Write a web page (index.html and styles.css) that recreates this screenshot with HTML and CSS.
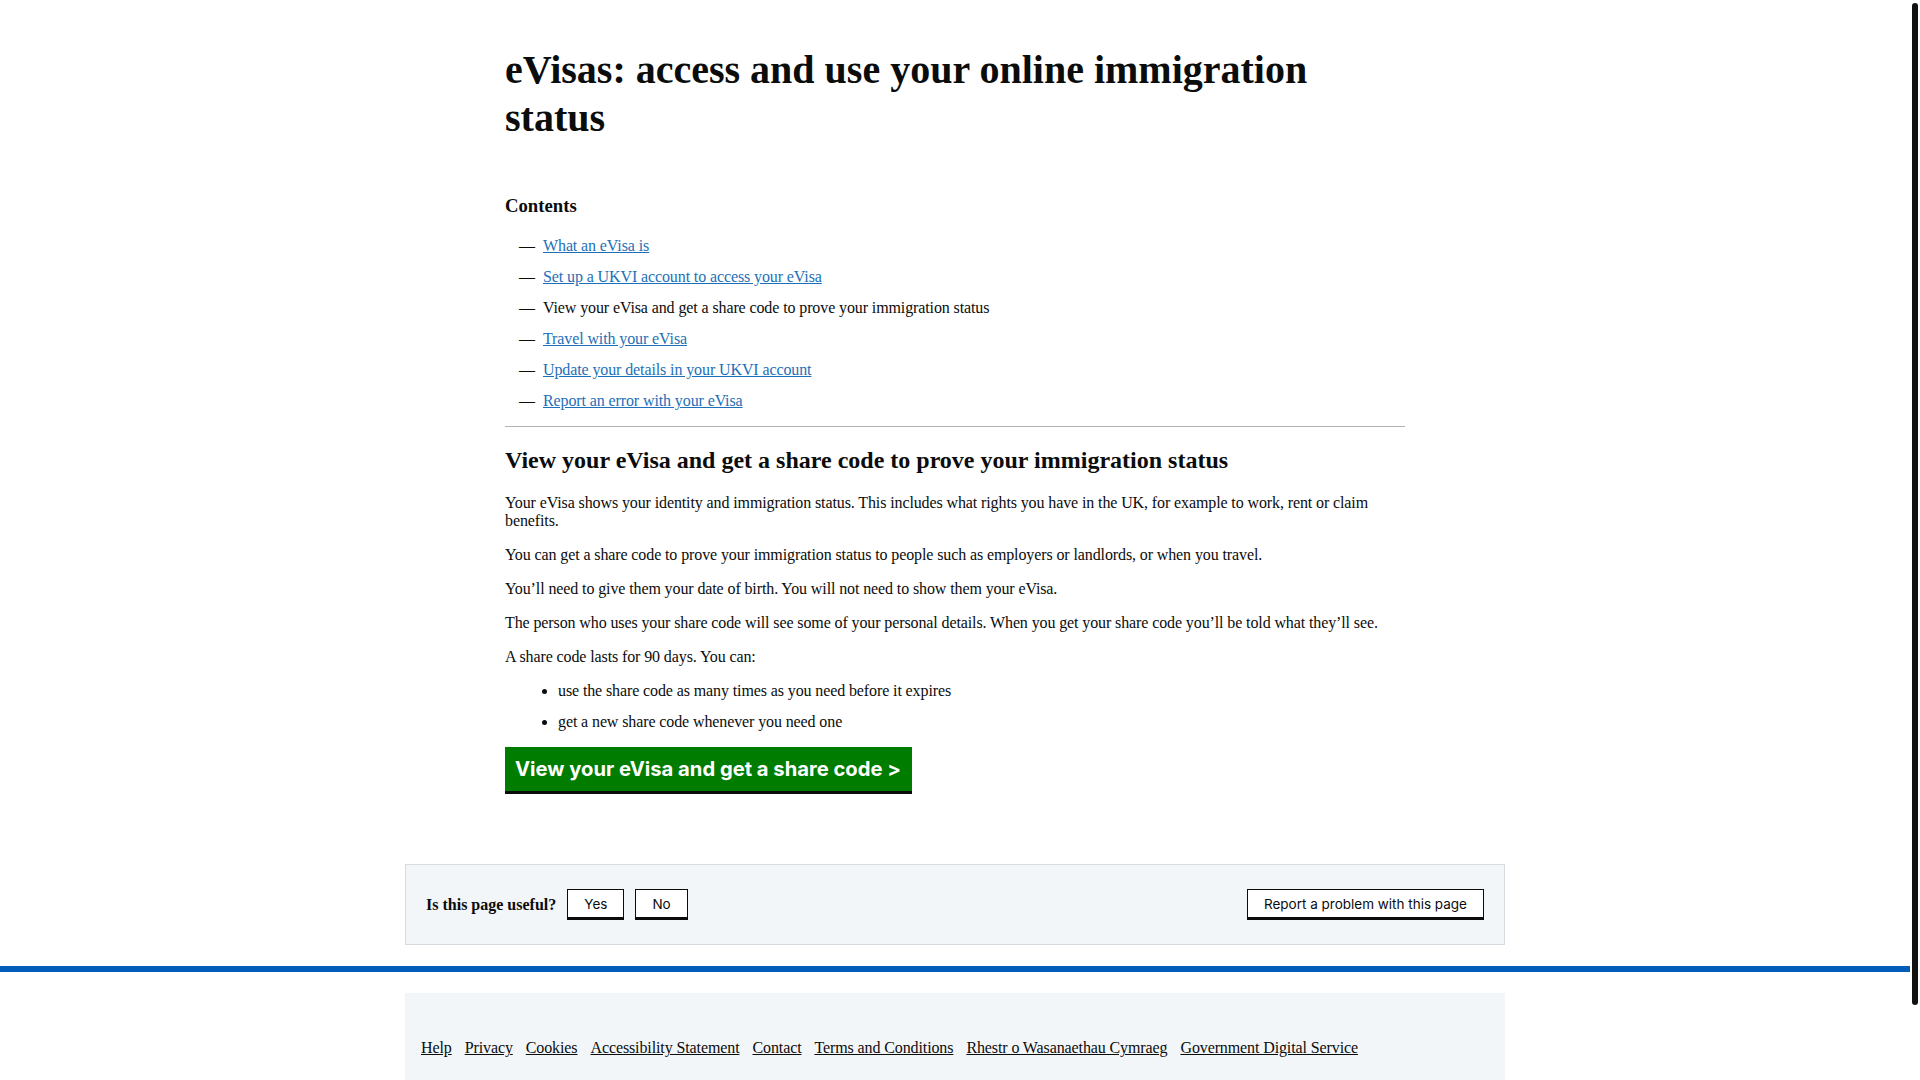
FILE: index.html
```html
<!DOCTYPE html>
<html lang="en">
<head>
<meta charset="utf-8">
<title>eVisas: access and use your online immigration status</title>
<link rel="stylesheet" href="styles.css">
</head>
<body>
<div class="viewport">
  <div class="page">
    <main class="main">
      <h1 class="title">eVisas: access and use your online immigration status</h1>
      <nav class="contents">
        <h2 class="contents-title">Contents</h2>
        <ul class="contents-list">
          <li><a href="#">What an eVisa is</a></li>
          <li><a href="#">Set up a UKVI account to access your eVisa</a></li>
          <li><span>View your eVisa and get a share code to prove your immigration status</span></li>
          <li><a href="#">Travel with your eVisa</a></li>
          <li><a href="#">Update your details in your UKVI account</a></li>
          <li><a href="#">Report an error with your eVisa</a></li>
        </ul>
      </nav>
      <hr class="rule">
      <h2 class="section-title">View your eVisa and get a share code to prove your immigration status</h2>
      <p>Your eVisa shows your identity and immigration status. This includes what rights you have in the UK, for example to work, rent or claim benefits.</p>
      <p>You can get a share code to prove your immigration status to people such as employers or landlords, or when you travel.</p>
      <p>You’ll need to give them your date of birth. You will not need to show them your eVisa.</p>
      <p>The person who uses your share code will see some of your personal details. When you get your share code you’ll be told what they’ll see.</p>
      <p>A share code lasts for 90 days. You can:</p>
      <ul class="bullets">
        <li>use the share code as many times as you need before it expires</li>
        <li>get a new share code whenever you need one</li>
      </ul>
      <a class="start-button" href="#">View your eVisa and get a share code &gt;</a>
    </main>

    <section class="feedback">
      <div class="feedback-left">
        <span class="feedback-q">Is this page useful?</span>
        <button class="fb-button" type="button">Yes</button>
        <button class="fb-button" type="button">No</button>
      </div>
      <button class="fb-button" type="button">Report a problem with this page</button>
    </section>

    <footer class="footer">
      <div class="footer-inner">
        <ul class="footer-links">
          <li><a href="#">Help</a></li>
          <li><a href="#">Privacy</a></li>
          <li><a href="#">Cookies</a></li>
          <li><a href="#">Accessibility Statement</a></li>
          <li><a href="#">Contact</a></li>
          <li><a href="#">Terms and Conditions</a></li>
          <li><a href="#">Rhestr o Wasanaethau Cymraeg</a></li>
          <li><a href="#">Government Digital Service</a></li>
        </ul>
      </div>
    </footer>
  </div>
  <div class="rail"><div class="thumb"></div></div>
</div>
</body>
</html>
```
FILE: styles.css
```css
html {
  overflow: hidden;
}

body {
  margin: 0;
  font-family: "Liberation Serif", "Times New Roman", serif;
  font-size: 16px;
  letter-spacing: -0.11px;
  color: #0b0c0c;
  background: #ffffff;
}

.viewport {
  display: flex;
  height: 100vh;
}

.page {
  flex: 1;
  overflow: hidden;
}

.rail {
  width: 10px;
  padding: 3px 2px;
  box-sizing: border-box;
  background: #ffffff;
}

.thumb {
  width: 6px;
  height: 1002px;
  background: #111111;
  border-radius: 3px;
}

.main {
  width: 900px;
  margin: 0 auto;
  padding-top: 46px;
}

.title {
  font-size: 40px;
  line-height: 48px;
  font-weight: bold;
  letter-spacing: 0;
  margin: 0 0 53px;
}

.contents-title {
  font-size: 18.72px;
  font-weight: bold;
  letter-spacing: 0;
  margin: 0 0 19px;
}

.contents-list {
  list-style: none;
  margin: 0 0 16px;
  padding: 0 0 0 14px;
}

.contents-list li {
  display: flex;
  line-height: 19px;
  margin-bottom: 12px;
}

.contents-list li:last-child {
  margin-bottom: 0;
}

.contents-list li::before {
  content: "—";
  width: 16px;
  margin-right: 8px;
}

a {
  color: #1d70b8;
}

.rule {
  border: 0;
  border-top: 1px solid #b1b4b6;
  height: 0;
  margin: 0;
}

.section-title {
  font-size: 24px;
  font-weight: bold;
  letter-spacing: 0;
  margin: 19.92px 0;
}

p {
  margin: 16px 0;
}

.bullets {
  margin: 16px 0;
  padding-left: 53px;
}

.bullets li {
  margin-bottom: 13.5px;
}

.bullets li:last-child {
  margin-bottom: 0;
}

.start-button {
  display: inline-block;
  background: #007d00;
  color: #ffffff;
  text-decoration: none;
  font-family: Inter, "Liberation Sans", sans-serif;
  font-weight: bold;
  font-size: 20.2px;
  letter-spacing: 0;
  line-height: 44px;
  padding: 0 11px 0 10px;
  box-shadow: 0 3px 0 #0b0c0c;
}

.feedback {
  width: 1100px;
  box-sizing: border-box;
  margin: 73px auto 0;
  padding: 24px 20px;
  background: #f3f6f9;
  border: 1px solid #d6dbe0;
  display: flex;
  align-items: center;
  justify-content: space-between;
}

.feedback-left {
  display: flex;
  align-items: center;
  gap: 11px;
}

.feedback-q {
  font-weight: bold;
  letter-spacing: 0;
}

.fb-button {
  font-family: Inter, "Liberation Sans", sans-serif;
  font-size: 13.5px;
  letter-spacing: 0;
  color: #0b0c0c;
  background: #ffffff;
  border: 1px solid #0b0c0c;
  border-bottom-width: 3px;
  border-radius: 0;
  height: 31px;
  padding: 0 16px;
  margin: 0;
}

.footer {
  margin-top: 21px;
  border-top: 6px solid #005eb8;
  padding-top: 21px;
}

.footer-inner {
  width: 1100px;
  margin: 0 auto;
  box-sizing: border-box;
  background: #f3f6f9;
  padding: 46px 16px 60px;
}

.footer-links {
  list-style: none;
  margin: 0;
  padding: 0;
  display: flex;
  flex-wrap: wrap;
  gap: 13px;
}

.footer-links a {
  color: #0b0c0c;
}
```
